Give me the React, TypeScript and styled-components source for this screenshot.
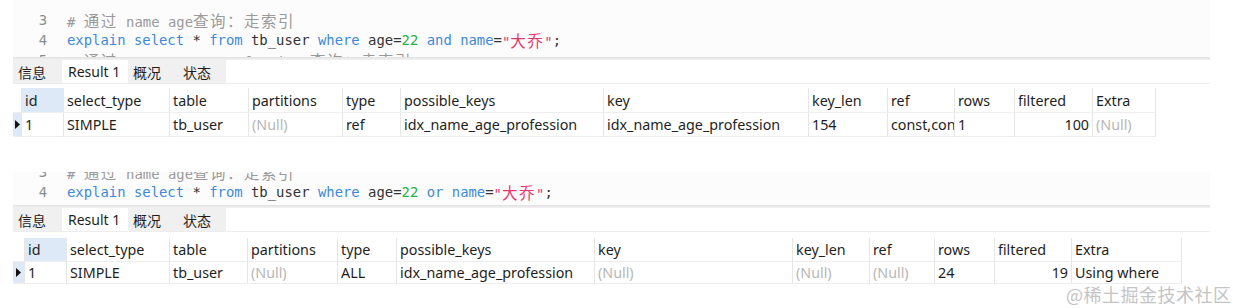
import React from "react";
import styled, { createGlobalStyle } from "styled-components";

const GlobalStyle = createGlobalStyle`
  html, body { margin: 0; padding: 0; background: #ffffff; }
  body { width: 1233px; height: 308px; overflow: hidden; }
`;

const Page = styled.div`
  position: relative;
  width: 1233px;
  height: 308px;
  display: flex;
  flex-direction: column;
  font-family: "Noto Sans", "Noto Sans CJK SC", sans-serif;
  color: #1e1e1e;
`;

const Block = styled.section<{ $top: number }>`
  margin: ${(p) => p.$top}px 0 0 13px;
  width: 1197px;
  display: flex;
  flex-direction: column;
`;

const Editor = styled.div<{ $height: number }>`
  height: ${(p) => p.$height}px;
  overflow: hidden;
  background: #fcfcfc;
`;

const EditorContent = styled.div<{ $offset: number }>`
  margin-top: ${(p) => p.$offset}px;
  display: flex;
  flex-direction: column;
`;

const CodeLine = styled.div`
  display: flex;
  height: 20px;
  line-height: 20px;
  font-family: "DejaVu Sans Mono", "Noto Sans CJK SC", monospace;
  font-size: 13.9px;
  white-space: pre;
  color: #333333;
`;

const LineNo = styled.span`
  flex: none;
  width: 34px;
  margin-right: 20px;
  text-align: right;
  color: #8c8c8c;
`;

type Kind = "kw" | "num" | "str" | "cmt" | "txt";

const Tok = styled.span<{ $kind: Kind }>`
  color: ${(p) =>
    p.$kind === "kw"
      ? "#3e89dc"
      : p.$kind === "num"
      ? "#25b34a"
      : p.$kind === "str"
      ? "#e5386c"
      : p.$kind === "cmt"
      ? "#9a9a9a"
      : "#333333"};
`;

const Cjk = styled.span`
  font-family: "Noto Sans CJK SC", sans-serif;
  font-size: 15.5px;
  letter-spacing: 1.5px;
`;

const Divider = styled.div`
  height: 3px;
  background: linear-gradient(#e0e0e0, #f3f3f3);
`;

const TabBar = styled.div`
  display: flex;
  height: 24px;
  border-bottom: 1px solid #ededed;
  box-sizing: border-box;
`;

const Tab = styled.div<{ $w: number; $pad: number; $active?: boolean }>`
  width: ${(p) => p.$w}px;
  box-sizing: border-box;
  padding-left: ${(p) => p.$pad}px;
  display: flex;
  align-items: center;
  font-size: 14px;
  background: ${(p) => (p.$active ? "#ffffff" : "#f0f0f0")};
  color: #1e1e1e;
  white-space: nowrap;
  overflow: hidden;
`;

const Grid = styled.div<{ $cols: string; $gap: number }>`
  display: grid;
  grid-template-columns: ${(p) => p.$cols};
  margin-top: ${(p) => p.$gap}px;
  font-size: 14.3px;
`;

const Cell = styled.div<{
  $h: number;
  $right?: boolean;
  $muted?: boolean;
  $hl?: boolean;
}>`
  height: ${(p) => p.$h}px;
  box-sizing: border-box;
  padding: 0 3px;
  display: flex;
  align-items: center;
  justify-content: ${(p) => (p.$right ? "flex-end" : "flex-start")};
  border-right: 1px solid #e6e6e6;
  border-bottom: 1px solid #eeeeee;
  background: ${(p) => (p.$hl ? "#dde9f6" : "#ffffff")};
  color: ${(p) => (p.$muted ? "#b7b7b7" : "#1e1e1e")};
  white-space: nowrap;
  overflow: hidden;
`;

const IndCell = styled(Cell)`
  padding: 0;
  justify-content: center;
`;

const Watermark = styled.div`
  position: absolute;
  left: 1066px;
  top: 281px;
  font-family: "Noto Sans CJK SC", sans-serif;
  font-size: 18px;
  color: #c4c4c4;
  letter-spacing: 0.5px;
  white-space: nowrap;
`;

const CJK_RE = /([\u3000-\u303f\u4e00-\u9fff\uff00-\uffef]+)/;

function renderText(text: string) {
  return text.split(CJK_RE).map((part, i) =>
    CJK_RE.test(part) ? <Cjk key={i}>{part}</Cjk> : <React.Fragment key={i}>{part}</React.Fragment>
  );
}

type Line = { n: number; toks: [Kind, string][] };

function Code({ lines, height, offset }: { lines: Line[]; height: number; offset: number }) {
  return (
    <Editor $height={height}>
      <EditorContent $offset={offset}>
        {lines.map((l) => (
          <CodeLine key={l.n}>
            <LineNo>{l.n}</LineNo>
            {l.toks.map(([k, t], i) => (
              <Tok key={i} $kind={k}>
                {renderText(t)}
              </Tok>
            ))}
          </CodeLine>
        ))}
      </EditorContent>
    </Editor>
  );
}

const Triangle = () => (
  <svg width="5" height="9" viewBox="0 0 5 9">
    <path d="M0 0 L5 4.5 L0 9 Z" fill="#111" />
  </svg>
);

const HEADERS = [
  "id",
  "select_type",
  "table",
  "partitions",
  "type",
  "possible_keys",
  "key",
  "key_len",
  "ref",
  "rows",
  "filtered",
  "Extra",
];

function ResultTable({
  ind,
  widths,
  row,
  gap,
  headH,
  rowH,
}: {
  ind: number;
  widths: number[];
  row: (string | null)[];
  gap: number;
  headH: number;
  rowH: number;
}) {
  const cols = [ind, ...widths].map((w) => `${w}px`).join(" ");
  return (
    <Grid $cols={cols} $gap={gap}>
      <IndCell $h={headH} />
      {HEADERS.map((h, i) => (
        <Cell key={h} $h={headH} $hl={i === 0}>
          {h}
        </Cell>
      ))}
      <IndCell $h={rowH} $hl>
        <Triangle />
      </IndCell>
      {row.map((v, i) => (
        <Cell key={i} $h={rowH} $muted={v === null} $right={HEADERS[i] === "filtered"}>
          {v === null ? "(Null)" : v}
        </Cell>
      ))}
    </Grid>
  );
}

function Tabs() {
  return (
    <TabBar>
      <Tab $w={49} $pad={5}>信息</Tab>
      <Tab $w={66} $pad={6} $active>
        Result 1
      </Tab>
      <Tab $w={47} $pad={5}>概况</Tab>
      <Tab $w={51} $pad={8}>状态</Tab>
    </TabBar>
  );
}

const comment3: [Kind, string][] = [["cmt", "# 通过 name age查询：走索引"]];

const lines1: Line[] = [
  { n: 3, toks: comment3 },
  {
    n: 4,
    toks: [
      ["kw", "explain select"],
      ["txt", " * "],
      ["kw", "from"],
      ["txt", " tb_user "],
      ["kw", "where"],
      ["txt", " age="],
      ["num", "22"],
      ["txt", " "],
      ["kw", "and name"],
      ["txt", "="],
      ["str", "\"大乔\""],
      ["txt", ";"],
    ],
  },
  { n: 5, toks: [["cmt", "# 通过 name, age, profession 查询：走索引"]] },
];

const lines2: Line[] = [
  { n: 3, toks: comment3 },
  {
    n: 4,
    toks: [
      ["kw", "explain select"],
      ["txt", " * "],
      ["kw", "from"],
      ["txt", " tb_user "],
      ["kw", "where"],
      ["txt", " age="],
      ["num", "22"],
      ["txt", " "],
      ["kw", "or name"],
      ["txt", "="],
      ["str", "\"大乔\""],
      ["txt", ";"],
    ],
  },
  { n: 5, toks: [["cmt", "# 通过 name age or profession 查询：走索引，or 左右 失效"]] },
];

export default function App() {
  return (
    <>
      <GlobalStyle />
      <Page>
        <Block $top={0}>
          <Code lines={lines1} height={57} offset={10} />
          <Divider />
          <Tabs />
          <ResultTable
            ind={9}
            widths={[42, 106, 79, 94, 58, 203, 205, 79, 67, 60, 78, 63]}
            row={[
              "1",
              "SIMPLE",
              "tb_user",
              null,
              "ref",
              "idx_name_age_profession",
              "idx_name_age_profession",
              "154",
              "const,const",
              "1",
              "100",
              null,
            ]}
            gap={4}
            headH={25}
            rowH={24}
          />
        </Block>
        <Block $top={35}>
          <Code lines={lines2} height={33} offset={-10} />
          <Divider />
          <Tabs />
          <ResultTable
            ind={12}
            widths={[42, 103, 78, 90, 59, 198, 198, 77, 65, 60, 77, 110]}
            row={[
              "1",
              "SIMPLE",
              "tb_user",
              null,
              "ALL",
              "idx_name_age_profession",
              null,
              null,
              null,
              "24",
              "19",
              "Using where",
            ]}
            gap={6}
            headH={24}
            rowH={22}
          />
        </Block>
        <Watermark>@稀土掘金技术社区</Watermark>
      </Page>
    </>
  );
}
